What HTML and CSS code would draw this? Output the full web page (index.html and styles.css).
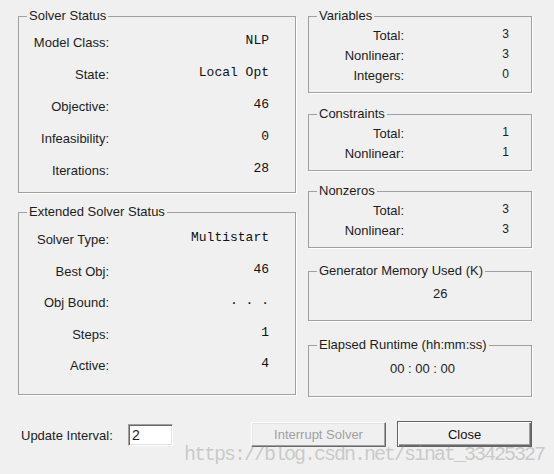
FILE: index.html
```html
<!DOCTYPE html>
<html>
<head>
<meta charset="utf-8">
<link rel="stylesheet" href="styles.css">
</head>
<body>
<div class="dialog">
  <div class="columns">
    <div class="col-left">
      <fieldset class="group status">
        <legend>Solver Status</legend>
        <div class="grid-left">
          <span class="lbl">Model Class:</span><span class="val">NLP</span>
          <span class="lbl">State:</span><span class="val">Local Opt</span>
          <span class="lbl">Objective:</span><span class="val">46</span>
          <span class="lbl">Infeasibility:</span><span class="val">0</span>
          <span class="lbl">Iterations:</span><span class="val">28</span>
        </div>
      </fieldset>
      <fieldset class="group ext">
        <legend>Extended Solver Status</legend>
        <div class="grid-left ext-grid">
          <span class="lbl">Solver Type:</span><span class="val">Multistart</span>
          <span class="lbl">Best Obj:</span><span class="val">46</span>
          <span class="lbl">Obj Bound:</span><span class="val dots">. . .</span>
          <span class="lbl">Steps:</span><span class="val">1</span>
          <span class="lbl">Active:</span><span class="val">4</span>
        </div>
      </fieldset>
    </div>
    <div class="col-right">
      <fieldset class="group small vars">
        <legend>Variables</legend>
        <div class="grid-right">
          <span class="lbl">Total:</span><span class="num">3</span>
          <span class="lbl">Nonlinear:</span><span class="num">3</span>
          <span class="lbl">Integers:</span><span class="num">0</span>
        </div>
      </fieldset>
      <fieldset class="group small cons">
        <legend>Constraints</legend>
        <div class="grid-right">
          <span class="lbl">Total:</span><span class="num">1</span>
          <span class="lbl">Nonlinear:</span><span class="num">1</span>
        </div>
      </fieldset>
      <fieldset class="group small nz">
        <legend>Nonzeros</legend>
        <div class="grid-right">
          <span class="lbl">Total:</span><span class="num">3</span>
          <span class="lbl">Nonlinear:</span><span class="num">3</span>
        </div>
      </fieldset>
      <fieldset class="group single mem">
        <legend>Generator Memory Used (K)</legend>
        <div class="single-val mem-val">26</div>
      </fieldset>
      <fieldset class="group single time">
        <legend>Elapsed Runtime (hh:mm:ss)</legend>
        <div class="single-val time-val">00 : 00 : 00</div>
      </fieldset>
    </div>
  </div>
  <div class="footer">
    <span class="upd-label">Update Interval:</span>
    <div class="input">2</div>
    <div class="btn disabled">Interrupt Solver</div>
    <div class="btn default">Close</div>
  </div>
  <div class="watermark">https://blog.csdn.net/sinat_33425327</div>
</div>
</body>
</html>
```

FILE: styles.css
```css
html, body {
  margin: 0;
  padding: 0;
}
body {
  background: #f0f0f0;
  width: 554px;
  height: 474px;
  overflow: hidden;
  font-family: "Liberation Sans", Arial, sans-serif;
  font-size: 13px;
  color: #1c1c1c;
}
.dialog {
  position: relative;
  width: 554px;
  height: 474px;
  box-sizing: border-box;
  padding: 8px 0 0 18px;
}
.columns {
  display: flex;
  gap: 12px;
  align-items: flex-start;
}
.col-left {
  width: 278px;
  display: flex;
  flex-direction: column;
}
.col-right {
  width: 224px;
  display: flex;
  flex-direction: column;
}
.group {
  margin: 0;
  border: 1px solid #a0a0a0;
  box-shadow: 1px 1px 0 #fff;
  padding: 0 0 0 8px;
  min-width: 0;
}
.group legend {
  padding: 0 2px;
  margin: 0;
  line-height: 16px;
  font-size: 13px;
  color: #1c1c1c;
}
.status {
  padding: 2px 26px 6px 8px;
}
.ext {
  margin-top: 11px;
  padding: 4px 26px 12px 8px;
}
.grid-left {
  display: grid;
  grid-template-columns: 82px 1fr;
  grid-auto-rows: 32px;
  align-items: center;
}
.ext-grid {
  grid-auto-rows: 31.5px;
}
.lbl {
  text-align: right;
  white-space: nowrap;
}
.val {
  text-align: right;
  font-family: "Liberation Mono", "Courier New", monospace;
  font-size: 13px;
  color: #111;
  white-space: pre;
  position: relative;
  top: -2px;
}
.small {
  padding: 1px 22px 7px 8px;
}
.grid-right {
  display: grid;
  grid-template-columns: 87px 1fr;
  grid-auto-rows: 20px;
  align-items: center;
}
.num {
  text-align: right;
  font-size: 12px;
  position: relative;
  top: -1px;
}
.cons {
  margin-top: 13px;
}
.nz {
  margin-top: 12px;
}
.single {
  padding: 5px 22px 16px 8px;
}
.mem {
  margin-top: 15px;
}
.time {
  margin-top: 16px;
  padding: 6px 22px 17px 8px;
}
.single-val {
  height: 20px;
  line-height: 20px;
  white-space: pre;
}
.mem-val {
  padding-left: 116px;
}
.time-val {
  padding-left: 73px;
}
.footer {
  display: flex;
  align-items: center;
  margin-top: 24px;
  height: 26px;
}
.upd-label {
  margin-left: 3px;
  margin-top: 3px;
  width: 88px;
  white-space: nowrap;
}
.input {
  margin-left: 19px;
  margin-top: 2px;
  width: 45px;
  height: 22px;
  box-sizing: border-box;
  background: #fff;
  border: 1px solid;
  border-color: #a0a0a0 #fff #fff #a0a0a0;
  box-shadow: inset 1px 1px 0 #696969, inset -1px -1px 0 #e3e3e3;
  padding: 2px 0 0 3px;
  line-height: 16px;
  font-size: 14px;
}
.btn {
  box-sizing: border-box;
  width: 135px;
  height: 25px;
  display: flex;
  align-items: center;
  justify-content: center;
  background: #f0f0f0;
  font-size: 13px;
}
.disabled {
  margin-left: 78px;
  color: #a0a0a0;
  border: 1px solid;
  border-color: #fff #696969 #696969 #fff;
  box-shadow: inset -1px -1px 0 #a0a0a0, inset 1px 1px 0 #e3e3e3;
}
.default {
  margin-left: 11px;
  height: 26px;
  color: #111;
  border: 1px solid #646464;
  box-shadow: inset 1px 1px 0 #fff, inset -1px -1px 0 #696969, inset -2px -2px 0 #a0a0a0;
}
.watermark {
  position: absolute;
  left: 184px;
  top: 443px;
  font-family: "Liberation Mono", "DejaVu Sans Mono", monospace;
  font-size: 20px;
  letter-spacing: -2px;
  color: rgba(140, 140, 140, 0.4);
  white-space: nowrap;
  pointer-events: none;
}
```
